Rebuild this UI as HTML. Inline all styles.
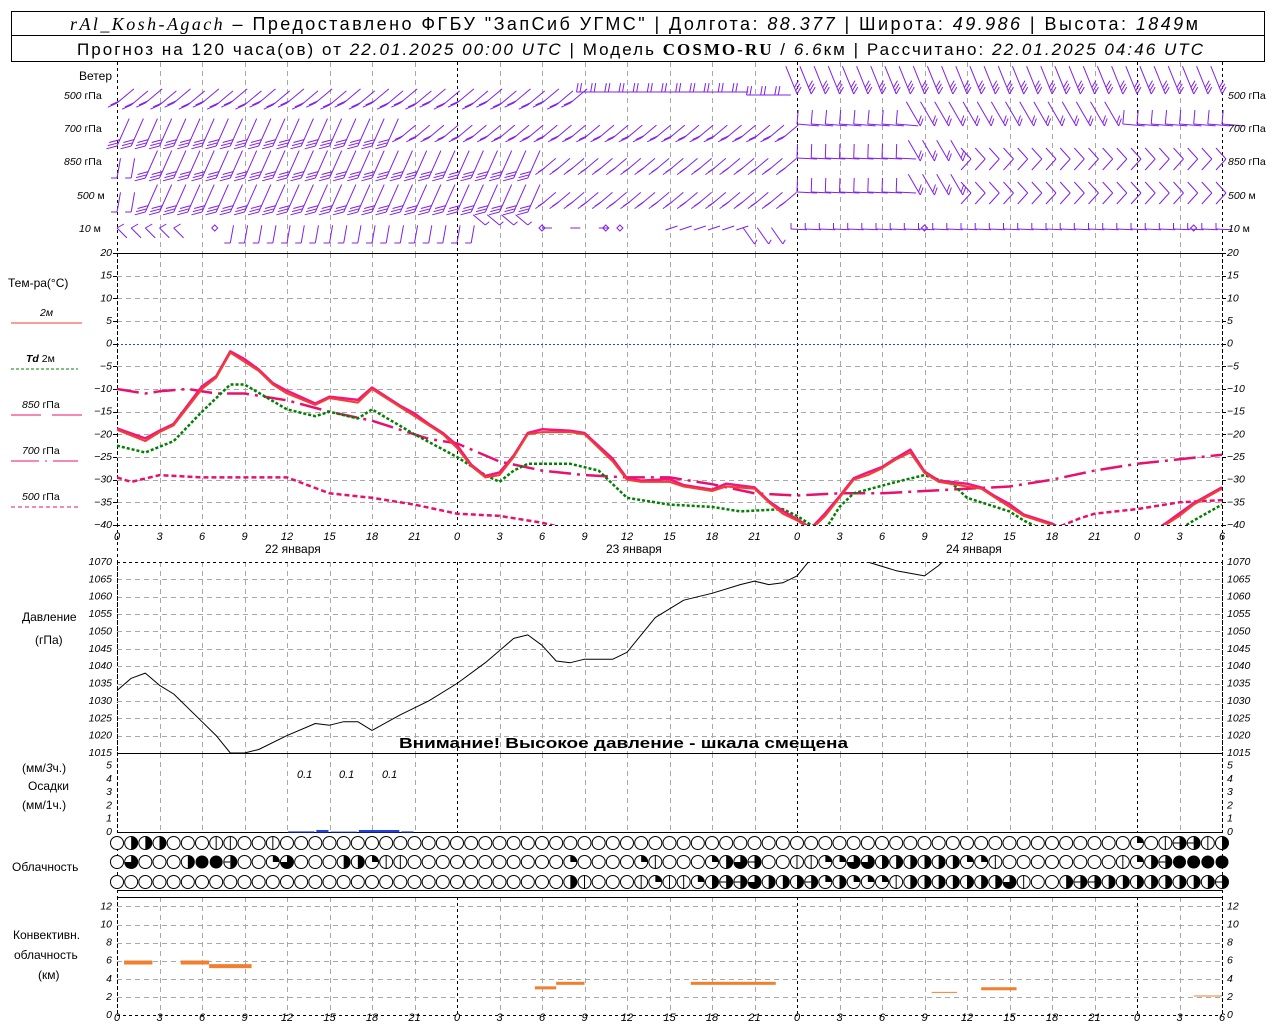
<!DOCTYPE html>
<html><head><meta charset="utf-8"><style>
html,body{margin:0;padding:0;background:#fff;width:1280px;height:1024px;overflow:hidden}
svg{display:block;font-family:"Liberation Sans","DejaVu Sans",sans-serif}
.t{font-size:12px;fill:#000}
.i{font-style:italic;font-size:11px;fill:#000}
.s{font-size:10.5px;font-style:italic;fill:#000}
</style></head><body>
<svg id="sv" width="1280" height="1024" viewBox="0 0 1280 1024" xmlns="http://www.w3.org/2000/svg">
<defs>
<clipPath id="ct"><rect x="117" y="253" width="1105" height="272"/></clipPath>
<clipPath id="cp"><rect x="117" y="562" width="1105" height="191"/></clipPath>
</defs>
<rect x="11.5" y="11.5" width="1253" height="24" fill="none" stroke="#000"/>
<rect x="11.5" y="35.5" width="1253" height="26" fill="none" stroke="#000"/>
<text x="70" y="30" font-size="18" textLength="1128" lengthAdjust="spacing"><tspan font-family="Liberation Serif" font-style="italic">rAl_Kosh-Agach</tspan> – Предоставлено ФГБУ "ЗапСиб УГМС" | Долгота: <tspan font-style="italic">88.377</tspan> | Широта: <tspan font-style="italic">49.986</tspan> | Высота: <tspan font-style="italic">1849</tspan>м</text>
<text x="77" y="55" font-size="17" textLength="1126" lengthAdjust="spacing">Прогноз на 120 часа(ов) от <tspan font-style="italic">22.01.2025 00:00 UTC</tspan> | Модель <tspan font-family="Liberation Serif" font-weight="bold">COSMO-RU</tspan> / <tspan font-style="italic">6.6</tspan>км | Рассчитано: <tspan font-style="italic">22.01.2025 04:46 UTC</tspan></text>

<g id="grid"></g>
<g id="graph"></g>

<text class="t" x="112" y="80" text-anchor="end">Ветер</text>
<text class="s" x="64" y="99">500 <tspan font-style="normal">гПа</tspan></text>
<text class="s" x="64" y="132">700 <tspan font-style="normal">гПа</tspan></text>
<text class="s" x="64" y="165">850 <tspan font-style="normal">гПа</tspan></text>
<text class="s" x="77" y="199">500 <tspan font-style="normal">м</tspan></text>
<text class="s" x="79" y="232">10 <tspan font-style="normal">  м</tspan></text>
<text class="s" x="1228" y="99">500 <tspan font-style="normal">гПа</tspan></text>
<text class="s" x="1228" y="132">700 <tspan font-style="normal">гПа</tspan></text>
<text class="s" x="1228" y="165">850 <tspan font-style="normal">гПа</tspan></text>
<text class="s" x="1228" y="199">500 <tspan font-style="normal">м</tspan></text>
<text class="s" x="1228" y="232">10 <tspan font-style="normal">  м</tspan></text>

<text class="t" x="8" y="287">Тем-ра(°C)</text>
<text class="s" x="40" y="316" font-style="normal">2м</text>
<line x1="11" y1="323" x2="82" y2="323" stroke="#f04030"/>
<text class="s" x="26" y="362"><tspan font-weight="bold">Td</tspan>  <tspan font-style="normal">2м</tspan></text>
<line x1="11" y1="369" x2="78" y2="369" stroke="#008000" stroke-dasharray="3,2"/>
<text class="s" x="22" y="408">850 <tspan font-style="normal">гПа</tspan></text>
<line x1="11" y1="415" x2="41" y2="415" stroke="#e8106e"/><line x1="52" y1="415" x2="82" y2="415" stroke="#e8106e"/>
<text class="s" x="22" y="454">700 <tspan font-style="normal">гПа</tspan></text>
<line x1="11" y1="461" x2="78" y2="461" stroke="#e8106e" stroke-dasharray="28,6,2,6"/>
<text class="s" x="22" y="500">500 <tspan font-style="normal">гПа</tspan></text>
<line x1="11" y1="507" x2="78" y2="507" stroke="#e8106e" stroke-dasharray="4,3"/>

<text class="t" x="265" y="553">22 января</text>
<text class="t" x="606" y="553">23 января</text>
<text class="t" x="946" y="553">24 января</text>

<text class="t" x="22" y="621">Давление</text>
<text class="t" x="35" y="644">(гПа)</text>
<text x="399" y="748" font-size="15" font-weight="bold" textLength="449" lengthAdjust="spacingAndGlyphs">Внимание! Высокое давление - шкала смещена</text>

<text class="t" x="22" y="772">(мм/<tspan font-style="italic">3</tspan>ч.)</text>
<text class="t" x="28" y="790">Осадки</text>
<text class="t" x="22" y="809">(мм/1ч.)</text>
<text class="i" x="297" y="778">0.1</text>
<text class="i" x="339" y="778">0.1</text>
<text class="i" x="382" y="778">0.1</text>

<text class="t" x="12" y="871">Облачность</text>
<text class="t" x="13" y="939">Конвективн.</text>
<text class="t" x="14" y="959">облачность</text>
<text class="t" x="38" y="979">(км)</text>

<g id="lab"></g>
</svg>
<script>
(function(){
var NS="http://www.w3.org/2000/svg";
function X(h){return 117+h*1105/78;}
function el(p,tag,a,txt){var e=document.createElementNS(NS,tag);for(var k in a)e.setAttribute(k,a[k]);if(txt!==undefined)e.textContent=txt;p.appendChild(e);return e;}
var G=document.getElementById('grid'),P=document.getElementById('graph'),L=document.getElementById('lab');
function ln(p,x1,y1,x2,y2,c,w,d){var a={x1:x1,y1:y1,x2:x2,y2:y2,stroke:c,'stroke-width':w||1};if(d)a['stroke-dasharray']=d;return el(p,'line',a);}
var panels=[[62,253],[253,525],[562,753],[753,832],[897,1015]];
for(var h=0;h<=78;h+=3){var x=Math.round(X(h))+0.5;var mid=(h%24==0)||h==78;
 panels.forEach(function(pp){ln(G,x,pp[0],x,pp[1],mid?'#000':'#a8a8a8',1,mid?'3,3':'5,4');});}
function TY(t){return 253+(20-t)*272/60;}
for(var t=15;t>=-35;t-=5){var y=Math.round(TY(t))+0.5;ln(G,117,y,1222,y,t==0?'#2040ff':'#a8a8a8',1,t==0?'2,2':'5,4');}
function PY(p){return 562+(1070-p)*191/55;}
for(var p=1065;p>1015;p-=5){var y=Math.round(PY(p))+0.5;ln(G,117,y,1222,y,'#a8a8a8',1,'5,4');}
ln(G,117,562.5,1222,562.5,'#000',1,'3,3');
function CY(k){return 1015-k*9.05;}
for(var k=2;k<=12;k+=2){var y=Math.round(CY(k))+0.5;ln(G,117,y,1222,y,'#a8a8a8',1,'5,4');}
ln(G,117,253.5,1222,253.5,'#000');ln(G,117,525.5,1222,525.5,'#000',1,'3,3');
ln(G,117,753.5,1222,753.5,'#000');ln(G,117,832.5,1222,832.5,'#000');
ln(G,117,890.5,1222,890.5,'#000');ln(G,117,897.5,1222,897.5,'#000');ln(G,117,1015.5,1222,1015.5,'#000',1,'3,3');
function lbl(x,y,s,anc){el(L,'text',{x:x,y:y,'class':'s','text-anchor':anc||'start'},s);}
for(var t=20;t>=-40;t-=5){var y=TY(t)+3;lbl(112,y,String(t).replace('-','−'),'end');lbl(1227,y,String(t).replace('-','−'));ln(G,113,Math.round(TY(t))+.5,117,Math.round(TY(t))+.5,'#000');ln(G,1222,Math.round(TY(t))+.5,1226,Math.round(TY(t))+.5,'#000');}
for(var p=1070;p>=1015;p-=5){var y=PY(p)+3;lbl(112,y,p,'end');lbl(1227,y,p);}
for(var k=0;k<=5;k++){var y=832-k*13.3+3;lbl(112,y,k,'end');lbl(1227,y,k);}
for(var k=0;k<=12;k+=2){var y=CY(k)+3;lbl(112,y,k,'end');lbl(1227,y,k);}
for(var h=0;h<=78;h+=3){var s=String(h%24);var x=X(h);
 el(L,'text',{x:x,y:540,'class':'i','font-size':'13','text-anchor':'middle'},s);
 el(L,'text',{x:x,y:1021,'class':'i','font-size':'13','text-anchor':'middle'},s);}
function series(pts,col,w,dash,clip,fy){var s='';pts.forEach(function(q){s+=X(q[0]).toFixed(1)+','+fy(q[1]).toFixed(1)+' ';});
 var a={points:s,fill:'none',stroke:col,'stroke-width':w,'clip-path':'url(#'+clip+')','stroke-linejoin':'round'};if(dash)a['stroke-dasharray']=dash;el(P,'polyline',a);}
var T2=[[0,-19],[2,-21.5],[3,-19.5],[4,-18],[6,-10],[7,-7.5],[8,-2],[9,-4],[10,-6],[11,-9],[12,-11],[14,-13.5],[15,-12],[17,-13],[18,-10],[20,-14],[21,-16],[22,-18],[23,-20],[24,-23],[25,-27],[26,-29.5],[27,-29],[28,-25],[29,-20],[30,-19.5],[32,-19.5],[33,-20],[35,-26],[36,-30],[37,-30.5],[39,-30.5],[40,-31.5],[42,-32.5],[43,-31.5],[45,-32],[46,-35],[47,-37.5],[48,-39],[49,-41],[50,-38],[51,-34],[52,-30],[53,-29],[54,-27.5],[55,-25.5],[56,-24],[57,-28.5],[58,-30.5],[60,-31.5],[61,-32],[62,-34],[63,-36],[64,-38],[66,-40],[67,-42],[73,-42],[74,-40],[75,-38],[76,-35.5],[78,-32]];
var T850=T2.map(function(q,i){return [q[0],q[1]+(i%3==1?0.6:0.3)];});
var T700=[[0,-10],[1,-10.5],[2,-11],[3,-10.5],[5,-10],[7,-11],[9,-11],[12,-12.5],[15,-15],[18,-17],[20,-19],[22,-21],[24,-22],[27,-26],[30,-28],[33,-29],[36,-29.5],[39,-29.5],[42,-31],[45,-33],[48,-33.5],[51,-33],[54,-33],[57,-32.5],[60,-32],[63,-31.5],[66,-30],[69,-28],[72,-26.5],[75,-25.5],[78,-24.5]];
var T500=[[0,-29.5],[1,-30.5],[3,-29],[6,-29.5],[9,-29.5],[12,-29.5],[15,-33],[18,-34],[21,-35.5],[24,-37.5],[27,-38],[30,-39.5],[32,-41],[66,-41],[68,-38.5],[69,-37.5],[72,-36.5],[75,-35],[78,-34.5]];
var TD=[[0,-22.5],[2,-24],[4,-21.5],[6,-15],[8,-9],[9,-9],[12,-14.5],[14,-16],[15,-15],[17,-16.5],[18,-14.5],[21,-20],[24,-25],[26,-29],[27,-30.5],[28,-28],[29,-26.5],[32,-26.5],[34,-28],[35,-31],[36,-34],[39,-35.5],[42,-36],[44,-37],[47,-36.5],[48,-38],[49,-40],[50,-41],[51,-36],[52,-33],[55,-30.5],[57,-29],[59,-31],[60,-34],[63,-37],[64,-39],[65,-40.5],[75,-41],[76,-39],[78,-35.5]];
series(T700,'#e8106e',2.5,'22,6,3,6','ct',TY);
series(T500,'#e8106e',2.5,'5,3','ct',TY);
series(TD,'#008000',2.5,'3,2','ct',TY);
series(T850,'#f01880',2.5,null,'ct',TY);
series(T2,'#f04030',2,null,'ct',TY);
var PR=[[0,1033],[1,1036.5],[2,1038],[3,1034.5],[4,1032],[6,1024],[7,1020],[8,1015],[9,1015],[10,1016],[12,1020],[14,1023.5],[15,1023],[16,1024],[17,1024],[18,1021.5],[20,1026],[22,1030],[24,1035],[26,1041],[27,1044.5],[28,1048],[29,1049],[30,1046],[31,1041.5],[32,1041],[33,1042],[35,1042],[36,1044],[38,1054],[40,1059],[42,1061],[44,1063.5],[45,1064.5],[46,1063.5],[47,1064],[48,1066],[49,1071],[52,1071],[53,1070],[55,1067.5],[57,1066],[58,1069],[58.5,1071]];
series(PR,'#000',1,null,'cp',PY);
[[12,14,0.3],[14,15,1],[15,17,0.2],[17,20,1],[20,21,0.3]].forEach(function(b){el(P,'rect',{x:X(b[0])+1,y:832-b[2]*2,width:X(b[1])-X(b[0])-2,height:b[2]*2+0.5,fill:'#2040e0'});});
[[0.5,2.5,5.8,4],[4.5,6.5,5.8,4],[6.5,9.5,5.4,4],[29.5,31,3,3],[31,33,3.5,3],[40.5,46.5,3.5,3],[57.5,59.3,2.5,1],[61,63.5,2.9,3],[76,78,2.1,1]].forEach(function(b){el(P,'rect',{x:X(b[0]),y:CY(b[2])-b[3]/2,width:X(b[1])-X(b[0]),height:b[3],fill:'#f08030'});});
function row(ov){var a=[];for(var i=0;i<=78;i++)a.push('0');for(var k in ov)a[+k]=ov[k];return a;}
var R1=row({1:'h',2:'h',3:'h',7:'v',8:'v',11:'v',72:'q',74:'v',75:'H',76:'H',77:'v',78:'h'});
var R2=row({1:'t',5:'h',6:'f',7:'f',8:'H',11:'q',12:'t',16:'h',17:'h',18:'q',19:'v',20:'v',32:'q',37:'q',38:'v',42:'q',43:'h',44:'t',45:'H',48:'v',49:'v',50:'q',51:'q',52:'t',53:'t',54:'h',55:'h',56:'h',57:'h',58:'h',59:'h',60:'q',61:'q',62:'v',71:'v',72:'q',73:'h',74:'H',75:'f',76:'f',77:'f',78:'f'});
var R3=row({32:'h',33:'v',37:'v',38:'q',39:'v',40:'v',41:'q',42:'h',43:'H',44:'H',45:'t',46:'h',47:'h',48:'h',49:'H',50:'q',51:'h',52:'q',53:'q',54:'q',55:'v',56:'h',57:'h',58:'h',59:'h',60:'h',61:'h',62:'h',63:'t',64:'v',67:'h',68:'H',69:'H',70:'h',71:'h',72:'h',73:'h',74:'h',75:'h',76:'h',77:'h',78:'H'});
function circ(x,y,c){var r=6.5;
 if(c=='f'){el(P,'circle',{cx:x,cy:y,r:r,fill:'#000'});return;}
 el(P,'circle',{cx:x,cy:y,r:r,fill:'#fff',stroke:'#000','stroke-width':1});
 if(c=='h'||c=='H')el(P,'path',{d:'M'+x+','+(y-r)+' A'+r+','+r+' 0 0 1 '+x+','+(y+r)+' Z',fill:'#000'});
 if(c=='H')ln(P,x-r,y,x,y,'#000');
 if(c=='v')ln(P,x,y-r,x,y+r,'#000');
 if(c=='q')el(P,'path',{d:'M'+x+','+y+' L'+x+','+(y-r)+' A'+r+','+r+' 0 0 1 '+(x+r)+','+y+' Z',fill:'#000'});
 if(c=='t')el(P,'path',{d:'M'+x+','+y+' L'+x+','+(y-r)+' A'+r+','+r+' 0 1 1 '+(x-r)+','+y+' Z',fill:'#000'});
}
[[R1,843],[R2,862],[R3,882]].forEach(function(rr){rr[0].forEach(function(c,i){circ(X(i),rr[1],c);});});
var PU='#8020e8';
function seg(x1,y1,x2,y2){ln(P,x1.toFixed(1),y1.toFixed(1),x2.toFixed(1),y2.toFixed(1),PU,1);}
function barb(x,y,ang,len,nf,fa,fl){var r=ang*Math.PI/180;var ex=x+len*Math.cos(r),ey=y-len*Math.sin(r);seg(x,y,ex,ey);
 var fr=fa*Math.PI/180;for(var i=0;i<nf;i++){var bx=x+(i*3.5)*Math.cos(r),by=y-(i*3.5)*Math.sin(r);seg(bx,by,bx+fl*Math.cos(fr),by-fl*Math.sin(fr));}}
for(var h=0;h<=78;h++){var x=X(h);
 if(h<33){barb(x,103+(h%2)*2,40,22,2,205,10);}
 else if(h<48){barb(x-8,92+(h>44?3:0),0,16,2,80,9);}
 else {barb(x,94,112,30,3,60,8);}
 if(h<20){barb(x,146,66,30,3,195,11);}
 else if(h<48){barb(x,138,40,20,2,205,9);}
 else if(h<56||h>70){barb(x,124,-5,22,1,85,14);}
 else {barb(x+10,126,120,28,2,70,8);}
 [[178,161],[212,195]].forEach(function(ly){var yb=ly[0],yc=ly[1];
  if(h<2){barb(x,yb,80,20,1,180,6);}
  else if(h<30){barb(x,yb,66,30,3,195,11);}
  else if(h<48){barb(x,yb-8,40,18,2,215,8);}
  else if(h<56){barb(x,yc-3,-3,20,1,88,14);}
  else if(h<60){barb(x+10,yc,120,24,2,70,8);}
  else {seg(x-6,yc-13,x+4,yc-2);seg(x+4,yc-2,x-6,yc+9);}
 });
 if(h<5){barb(x,228,-45,14,1,30,8);}
 else if(h<8){}
 else if(h<26){barb(x,243,80,18,1,180,6);}
 else if(h<30){barb(x,225,140,16,1,40,5);}
 else if(h<36){if(h%2==0)barb(x,228,0,10,0,0,0);}
 else if(h<48){if(h>44)barb(x,244,125,20,1,60,5);else if(h>38)seg(x-4,230,x+8,226);}
 else {barb(x-6,229,-3,16,1,90,6);}
}
[[6.9],[30],[34.5],[35.5],[57],[76]].forEach(function(d){var x=X(d[0]);el(P,'path',{d:'M'+(x-3)+',228 L'+x+',225 L'+(x+3)+',228 L'+x+',231 Z',fill:'none',stroke:PU});});
ln(G,117.5,62,117.5,1015,'#000',1,'3,3');ln(G,1222.5,62,1222.5,1015,'#000',1,'3,3');
})();
</script>
</body></html>
